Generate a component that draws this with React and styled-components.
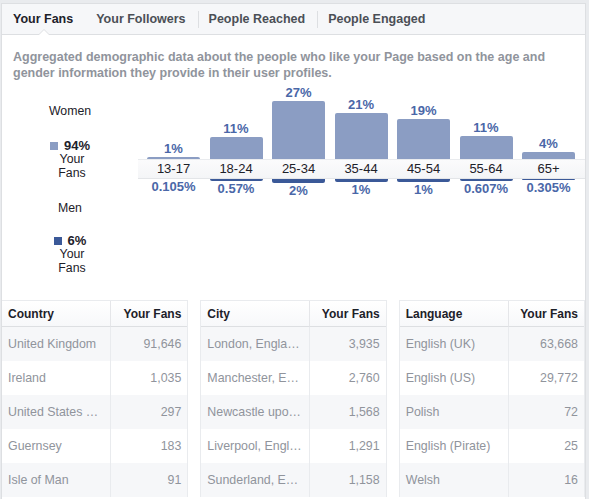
import styled, { createGlobalStyle } from "styled-components";

const tabs = ["Your Fans", "Your Followers", "People Reached", "People Engaged"];

// bar heights are in px, read off the chart
const ages = [
  { age: "13-17", women: "1%", wh: 2, men: "0.105%", mh: 0 },
  { age: "18-24", women: "11%", wh: 22, men: "0.57%", mh: 2 },
  { age: "25-34", women: "27%", wh: 58, men: "2%", mh: 4 },
  { age: "35-44", women: "21%", wh: 46, men: "1%", mh: 3 },
  { age: "45-54", women: "19%", wh: 40, men: "1%", mh: 3 },
  { age: "55-64", women: "11%", wh: 23, men: "0.607%", mh: 1.5 },
  { age: "65+", women: "4%", wh: 7, men: "0.305%", mh: 1 },
];

const tables = [
  {
    title: "Country",
    rows: [
      ["United Kingdom", "91,646"],
      ["Ireland", "1,035"],
      ["United States …", "297"],
      ["Guernsey", "183"],
      ["Isle of Man", "91"],
    ],
  },
  {
    title: "City",
    rows: [
      ["London, Engla…", "3,935"],
      ["Manchester, E…", "2,760"],
      ["Newcastle upo…", "1,568"],
      ["Liverpool, Engl…", "1,291"],
      ["Sunderland, E…", "1,158"],
    ],
  },
  {
    title: "Language",
    rows: [
      ["English (UK)", "63,668"],
      ["English (US)", "29,772"],
      ["Polish", "72"],
      ["English (Pirate)", "25"],
      ["Welsh", "16"],
    ],
  },
];

const App = () => {
  return (
    <>
      <GlobalStyle />
      <Card>
        <TabBar>
          {tabs.map((t, i) => (
            <Tab key={t} $active={i === 0}>
              {t}
              {i === 0 && <Caret />}
            </Tab>
          ))}
        </TabBar>
        <Intro>
          Aggregated demographic data about the people who like your Page based on the age and
          gender information they provide in their user profiles.
        </Intro>
        <ChartSection>
          <Legend>
            <Gender>Women</Gender>
            <Share>
              <Swatch $color="#8b9dc3" />
              <SharePct>94%</SharePct>
            </Share>
            <ShareNote>Your<br />Fans</ShareNote>
            <Gender $gap={20}>Men</Gender>
            <Share>
              <Swatch $color="#3b5998" />
              <SharePct>6%</SharePct>
            </Share>
            <ShareNote>Your<br />Fans</ShareNote>
          </Legend>
          <Chart>
            <Upper>
              {ages.map(a => (
                <Column key={a.age}>
                  <BarLabel>{a.women}</BarLabel>
                  <Bar style={{ height: a.wh }} />
                </Column>
              ))}
            </Upper>
            <Band>
              {ages.map(a => (
                <AgeLabel key={a.age}>{a.age}</AgeLabel>
              ))}
            </Band>
            <Lower>
              {ages.map(a => (
                <Column key={a.age}>
                  <Bar $men style={{ height: a.mh }} />
                  <BarLabel>{a.men}</BarLabel>
                </Column>
              ))}
            </Lower>
          </Chart>
        </ChartSection>
        <Tables>
          {tables.map(t => (
            <Table key={t.title}>
              <HeadCell>{t.title}</HeadCell>
              <HeadCell $right>Your Fans</HeadCell>
              {t.rows.map((r, i) => (
                <Row key={r[0]} $shade={i % 2 === 0}>
                  <Cell>{r[0]}</Cell>
                  <Cell $right>{r[1]}</Cell>
                </Row>
              ))}
            </Table>
          ))}
        </Tables>
      </Card>
    </>
  );
};

const GlobalStyle = createGlobalStyle`
body {
  margin: 0;
  background: #e9ebee;
  font-family: "Liberation Sans", Helvetica, Arial, sans-serif;
  color: #1d2129;
}
`;
const Card = styled.div`
margin: 3px 3px 0 1px;
min-height: 496px;
background: #fff;
border: 1px solid #dddfe2;
border-bottom: none;
`;
const TabBar = styled.div`
display: flex;
align-items: center;
height: 30px;
background: #f6f7f9;
border-bottom: 1px solid #dddfe2;
`;
const Tab = styled.div`
position: relative;
display: flex;
align-items: center;
height: 30px;
padding: 0 12px 0 11px;
font-size: 12.5px;
font-weight: bold;
color: ${p => (p.$active ? "#1d2129" : "#4b4f56")};
  & + &::before {
    content: "";
    position: absolute;
    left: 0;
    top: 7px;
    width: 1px;
    height: 17px;
    background: #dddfe2;
  }
`;
const Caret = styled.span`
position: absolute;
left: 50%;
bottom: -1px;
margin-left: -6px;
width: 0;
height: 0;
border: 6px solid transparent;
border-top: none;
border-bottom-color: #dddfe2;
  &::after {
    content: "";
    position: absolute;
    left: -5px;
    top: 1px;
    border: 5px solid transparent;
    border-top: none;
    border-bottom-color: #fff;
  }
`;
const Intro = styled.p`
margin: 0;
padding: 14px 10px 0 11px;
font-size: 12.5px;
font-weight: bold;
line-height: 16px;
color: #90949c;
`;
const ChartSection = styled.div`
display: flex;
margin-top: 3px;
height: 216px;
`;
const Legend = styled.div`
display: flex;
flex-direction: column;
align-items: center;
width: 136px;
flex: none;
font-size: 12.3px;
`;
const Gender = styled.div`
margin-top: ${p => p.$gap ?? 19}px;
margin-bottom: ${p => (p.$gap ? 18 : 20)}px;
line-height: 16px;
`;
const Share = styled.div`
display: flex;
align-items: center;
gap: 6px;
line-height: 13px;
`;
const Swatch = styled.span`
width: 8px;
height: 8px;
background: ${p => p.$color};
`;
const SharePct = styled.span`
font-size: 13px;
font-weight: bold;
`;
const ShareNote = styled.div`
padding-left: 4px;
text-align: center;
line-height: 14px;
`;
const Chart = styled.div`
flex: 1;
display: flex;
flex-direction: column;
`;
const Upper = styled.div`
display: flex;
align-items: flex-end;
gap: 9.5px;
height: 75px;
padding: 0 10px 0 9px;
`;
const Lower = styled.div`
display: flex;
align-items: flex-start;
gap: 9.5px;
padding: 0 10px 0 9px;
`;
const Column = styled.div`
display: flex;
flex-direction: column;
align-items: center;
width: 53px;
flex: none;
`;
const BarLabel = styled.div`
font-size: 13px;
font-weight: bold;
line-height: 16px;
color: #4a67a8;
`;
const Bar = styled.div`
align-self: stretch;
background: ${p => (p.$men ? "#3b5998" : "#8b9dc3")};
border-radius: ${p => (p.$men ? "0 0 2px 2px" : "2px 2px 0 0")};
`;
const Band = styled.div`
display: flex;
gap: 9.5px;
height: 18px;
padding: 0 10px 0 9px;
background: linear-gradient(#fbfbfc, #f4f5f7);
border-top: 1px solid #e9ebee;
border-bottom: 1px solid #e3e5e8;
`;
const AgeLabel = styled.div`
width: 53px;
flex: none;
text-align: center;
font-size: 13px;
line-height: 18px;
color: #1d2129;
`;
const Tables = styled.div`
display: grid;
grid-template-columns: repeat(3, 1fr);
gap: 12px;
`;
const Table = styled.div`
display: grid;
grid-template-columns: 108px 1fr;
grid-auto-rows: 34px;
grid-template-rows: 26px;
border-left: 1px solid #e9ebee;
border-right: 1px solid #e9ebee;
border-top: 1px solid #e9ebee;
  &:first-child {
    border-left: none;
  }
`;
const HeadCell = styled.div`
display: flex;
align-items: center;
justify-content: ${p => (p.$right ? "flex-end" : "flex-start")};
padding: 0 6px;
font-size: 12px;
font-weight: bold;
color: #1d2129;
background: linear-gradient(#fff, #f7f8fa);
border-bottom: 1px solid #dddfe2;
box-shadow: 0 1px 0 #eef0f2;
border-left: ${p => (p.$right ? "1px solid #e5e6e9" : "none")};
`;
const Row = styled.div`
display: contents;
  & > div {
    background: ${p => (p.$shade ? "#f6f7f9" : "#fff")};
  }
`;
const Cell = styled.div`
min-width: 0;
padding: 0 6px;
line-height: 34px;
font-size: 12.4px;
color: #90949c;
white-space: nowrap;
overflow: hidden;
text-overflow: ellipsis;
text-align: ${p => (p.$right ? "right" : "left")};
border-left: ${p => (p.$right ? "1px solid #e9ebee" : "none")};
`;

export default App;
